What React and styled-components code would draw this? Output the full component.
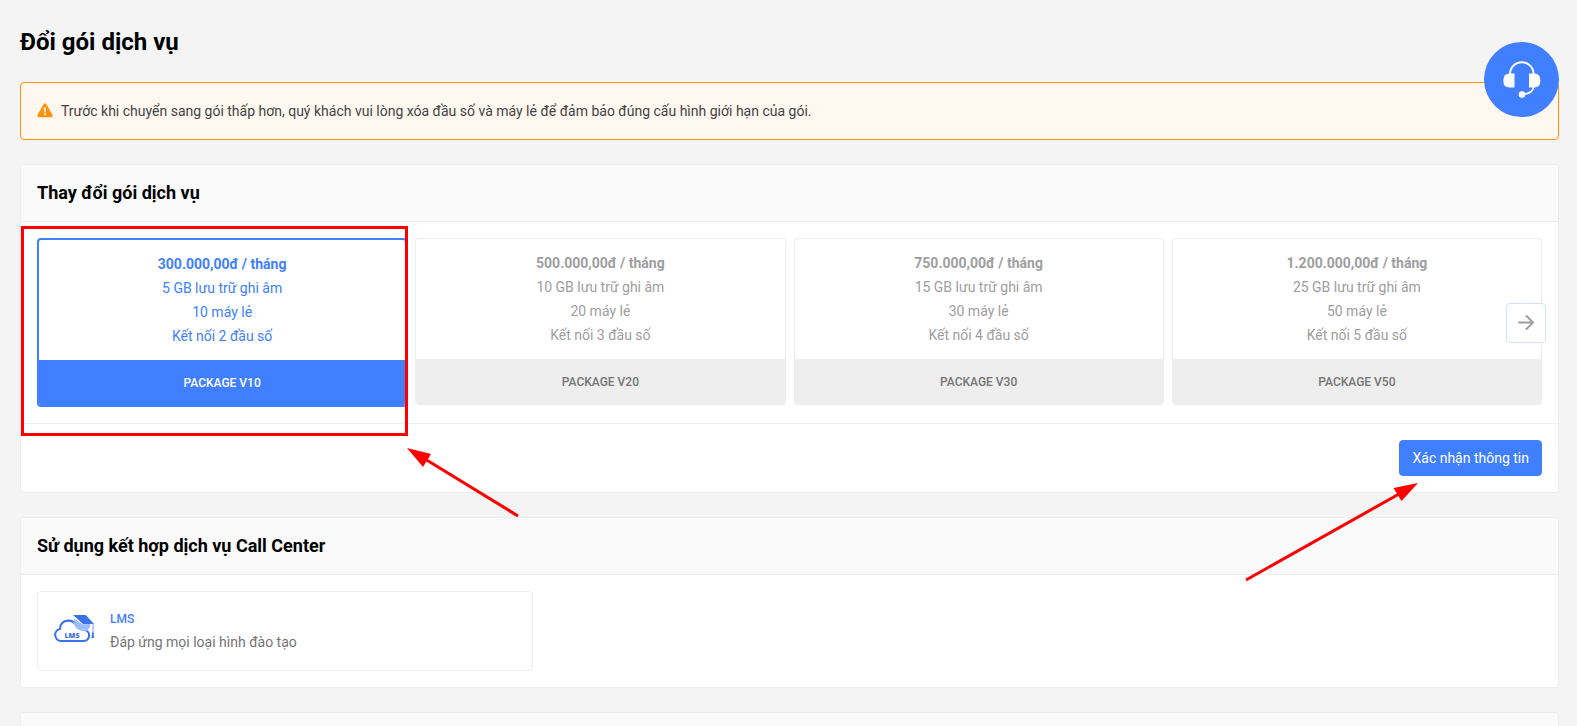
import React from "react";
import styled, { createGlobalStyle, css } from "styled-components";

const blue = "#407fff";
const red = "#ff0000";
const line = "#ededed";

const GlobalStyle = createGlobalStyle`
  *, *::before, *::after { box-sizing: border-box; }
  body {
    margin: 0;
    background: #f4f4f4;
    color: #000;
    font-family: Roboto, "Liberation Sans", sans-serif;
    font-size: 14px;
    line-height: 24px;
  }
  button { font: inherit; cursor: pointer; }
`;

const Page = styled.main`
  height: 100vh;
  overflow: hidden;
  padding: 26px 18px 0 20px;
  display: flex;
  flex-direction: column;
  gap: 24px;
`;

const PageTitle = styled.h1`
  margin: 0;
  font-size: 24px;
  line-height: 32px;
  font-weight: 700;
`;

const Alert = styled.div`
  position: relative;
  display: flex;
  align-items: center;
  gap: 8px;
  padding: 16px;
  border: 1px solid #ff9209;
  border-radius: 4px;
  background: #fff8f1;
  color: #434343;
  flex-shrink: 0;
`;

const SupportButton = styled.button`
  position: absolute;
  top: -41px;
  right: -1px;
  width: 75px;
  height: 75px;
  padding: 0;
  border: 0;
  border-radius: 50%;
  background: ${blue};
  display: grid;
  place-items: center;
`;

const Panel = styled.section`
  border: 1px solid ${line};
  border-radius: 4px;
  background: #fff;
  flex-shrink: 0;
`;

const PanelHeader = styled.header`
  min-height: 57px;
  padding: 16px;
  border-bottom: 1px solid ${line};
  border-radius: 4px 4px 0 0;
  background: #fafafa;
`;

const PanelTitle = styled.h2`
  margin: 0;
  font-size: 18px;
  line-height: 24px;
  font-weight: 700;
`;

const PanelBody = styled.div`
  padding: 16px;
`;

const PanelFooter = styled.footer`
  display: flex;
  justify-content: flex-end;
  padding: 16px;
  border-top: 1px solid ${line};
`;

const PackageList = styled.div`
  position: relative;
  display: grid;
  grid-template-columns: repeat(4, minmax(0, 1fr));
  align-items: start;
  gap: 8px;
`;

const Cell = styled.div`
  position: relative;
  display: flex;
`;

const PackageName = styled.span`
  display: block;
  padding: 12px 12px 11px;
  background: #eee;
  color: #757575;
  font-size: 12px;
  line-height: 22px;
  font-weight: 500;
`;

const PackageFeatures = styled.span`
  display: flex;
  flex-direction: column;
  padding: 12px;
`;

const Price = styled.strong`
  font-weight: 700;
`;

const PackageCard = styled.button`
  flex: 1;
  padding: 0;
  border: 1px solid ${line};
  border-bottom-color: #eee;
  border-radius: 4px;
  overflow: hidden;
  background: #fff;
  color: #9e9e9e;
  text-align: center;
  ${(p) =>
    p.$selected &&
    css`
      border: 2px solid ${blue};
      color: ${blue};
      ${PackageName} {
        background: ${blue};
        color: #fff;
      }
    `}
`;

const NextButton = styled.button`
  position: absolute;
  top: 65px;
  right: -4px;
  width: 40px;
  height: 40px;
  padding: 0;
  border: 1px solid #d6e1ff;
  border-radius: 4px;
  background: #fff;
  display: grid;
  place-items: center;
`;

const ConfirmWrap = styled.div`
  position: relative;
`;

const ConfirmButton = styled.button`
  display: block;
  height: 36px;
  padding: 0 12px;
  border: 1px solid ${blue};
  border-radius: 4px;
  background: ${blue};
  color: #fff;
`;

const Highlight = styled.div`
  position: absolute;
  inset: -12px -1px -29px -16px;
  border: 3px solid ${red};
  pointer-events: none;
  z-index: 1;
`;

const Arrow = styled.svg`
  position: absolute;
  pointer-events: none;
  overflow: visible;
  z-index: 2;
  fill: ${red};
  stroke: none;
  line {
    stroke: ${red};
    stroke-width: 3;
  }
`;

const PackageArrow = styled(Arrow)`
  top: 210px;
  left: 100%;
`;

const ConfirmArrow = styled(Arrow)`
  top: 43px;
  right: 124px;
`;

const ServiceGrid = styled.div`
  display: grid;
  grid-template-columns: repeat(3, minmax(0, 1fr));
  gap: 8px;
`;

const ServiceCard = styled.a`
  display: flex;
  align-items: center;
  gap: 16px;
  padding: 15px 16px;
  border: 1px solid ${line};
  border-radius: 4px;
  color: #757575;
  text-decoration: none;
`;

const ServiceText = styled.span`
  display: flex;
  flex-direction: column;
  min-height: 48px;
`;

const ServiceName = styled.span`
  color: ${blue};
  font-size: 12px;
  font-weight: 500;
`;

const ServiceNote = styled.span`
  line-height: 22px;
`;

const WarningIcon = () => (
  <svg width="16" height="16" viewBox="0 0 16 16" aria-hidden="true">
    <path
      d="M6.600 1.300Q8-.6 9.400 1.300L15.400 11.800Q16.200 14 14.200 14.200H1.800Q-.2 14 .6 11.800Z"
      fill="#ff9209"
    />
    <path d="M6.900 4.500h2.200l-.4 4.900H7.300z" fill="#fff8f1" />
    <circle cx="8" cy="11.300" r="1.100" fill="#fff8f1" />
  </svg>
);

const HeadsetIcon = () => (
  <svg width="39" height="39" viewBox="0 0 39 39" fill="none" aria-hidden="true">
    <path d="M8 14.500V14a11.800 11.800 0 0 1 23.600 0V14.500" stroke="#fff" strokeWidth="2" />
    <path d="M32 26.500c-1 4.600-4.500 7.200-10 7.700" stroke="#fff" strokeWidth="1.600" />
    <path d="M12.500 13.500v14H7.500Q1.300 27.500 1.300 20.500T7.500 13.500z" fill="#fff" />
    <path d="M27 13.500v14h5.200q6.200 0 6.200-7t-6.200-7z" fill="#fff" />
    <circle cx="20" cy="34.500" r="3.300" fill="#fff" />
  </svg>
);

const ArrowRightIcon = () => (
  <svg width="18" height="18" viewBox="0 0 18 18" fill="none" aria-hidden="true">
    <path
      d="M2 8.500h14M9.500 2l6.500 6.500L9.500 15"
      stroke="#9e9e9e"
      strokeWidth="2"
      strokeLinecap="round"
      strokeLinejoin="round"
    />
  </svg>
);

const LmsLogo = () => (
  <svg width="40" height="40" viewBox="0 0 40 40" aria-hidden="true">
    <path
      d="M6.500 30H29.500a5.600 5.600 0 0 0 1.500-11A8.300 8.300 0 0 0 22 14C20.500 10.800 17 9.600 14 9.600 9.200 9.600 5.800 13 6.100 17.800A6.200 6.200 0 0 0 6.500 30Z"
      fill="#fff"
      stroke="#3b72e8"
      strokeWidth="2.100"
    />
    <path
      d="M19.800 7.500 28.500 13.200 36 13V16Q34 17.500 34 19.500 30.500 21 26 19.300 18.500 16.500 19.800 7.500Z"
      fill="#9dbcff"
    />
    <path d="M19 3.900H31.800L40 12.900H29Z" fill="#3b72e8" />
    <path d="M39 12.500V23" stroke="#6f9af5" strokeWidth="1" />
    <path d="M38.200 21.500h1.400l.4 5.500h-2.600z" fill="#3b72e8" />
    <text
      x="18"
      y="27"
      textAnchor="middle"
      fontFamily="Open Sans, sans-serif"
      fontSize="7"
      fontWeight="800"
      fill="#3b72e8"
    >
      LMS
    </text>
  </svg>
);

const packages = [
  { name: "PACKAGE V10", price: "300.000,00đ", storage: 5, phones: 10, lines: 2, selected: true },
  { name: "PACKAGE V20", price: "500.000,00đ", storage: 10, phones: 20, lines: 3 },
  { name: "PACKAGE V30", price: "750.000,00đ", storage: 15, phones: 30, lines: 4 },
  { name: "PACKAGE V50", price: "1.200.000,00đ", storage: 25, phones: 50, lines: 5 },
];

export default function App() {
  return (
    <>
      <GlobalStyle />
      <Page>
        <PageTitle>Đổi gói dịch vụ</PageTitle>

        <Alert role="alert">
          <WarningIcon />
          <span>
            Trước khi chuyển sang gói thấp hơn, quý khách vui lòng xóa đầu số và máy lẻ để đảm bảo
            đúng cấu hình giới hạn của gói.
          </span>
          <SupportButton type="button">
            <HeadsetIcon />
          </SupportButton>
        </Alert>

        <Panel>
          <PanelHeader>
            <PanelTitle>Thay đổi gói dịch vụ</PanelTitle>
          </PanelHeader>
          <PanelBody>
            <PackageList>
              {packages.map((p) => (
                <Cell key={p.name}>
                  <PackageCard type="button" aria-pressed={!!p.selected} $selected={p.selected}>
                    <PackageFeatures>
                      <Price>{`${p.price} / tháng`}</Price>
                      <span>{`${p.storage} GB lưu trữ ghi âm`}</span>
                      <span>{`${p.phones} máy lẻ`}</span>
                      <span>{`Kết nối ${p.lines} đầu số`}</span>
                    </PackageFeatures>
                    <PackageName>{p.name}</PackageName>
                  </PackageCard>
                  {p.selected && (
                    <>
                      <Highlight />
                      <PackageArrow width="112" height="68" viewBox="0 0 112 68">
                        <line x1="111" y1="68" x2="18" y2="11" />
                        <path d="M0 0 24 6 16 19Z" />
                      </PackageArrow>
                    </>
                  )}
                </Cell>
              ))}
              <NextButton type="button">
                <ArrowRightIcon />
              </NextButton>
            </PackageList>
          </PanelBody>
          <PanelFooter>
            <ConfirmWrap>
              <ConfirmButton type="button">Xác nhận thông tin</ConfirmButton>
              <ConfirmArrow width="172" height="97" viewBox="0 0 172 97">
                <line x1="0" y1="97" x2="153" y2="11" />
                <path d="M172 0 147.500 5 155.500 18Z" />
              </ConfirmArrow>
            </ConfirmWrap>
          </PanelFooter>
        </Panel>

        <Panel>
          <PanelHeader>
            <PanelTitle>Sử dụng kết hợp dịch vụ Call Center</PanelTitle>
          </PanelHeader>
          <PanelBody>
            <ServiceGrid>
              <ServiceCard href="#lms">
                <LmsLogo />
                <ServiceText>
                  <ServiceName>LMS</ServiceName>
                  <ServiceNote>Đáp ứng mọi loại hình đào tạo</ServiceNote>
                </ServiceText>
              </ServiceCard>
            </ServiceGrid>
          </PanelBody>
        </Panel>

        <Panel>
          <PanelHeader />
        </Panel>
      </Page>
    </>
  );
}
